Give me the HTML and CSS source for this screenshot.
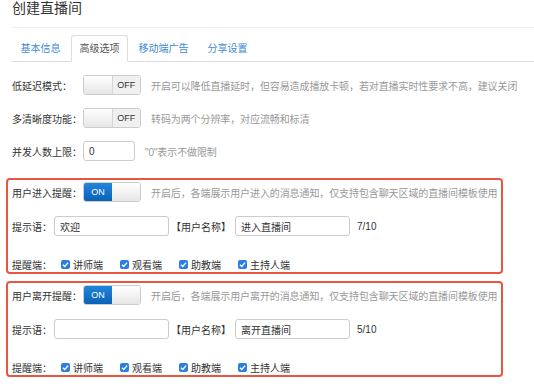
FILE: index.html
```html
<!DOCTYPE html>
<html lang="zh-CN">
<head>
  <meta charset="UTF-8" />
  <meta name="viewport" content="width=device-width, initial-scale=1.0"/>
  <title>创建直播间</title>
  <link rel="stylesheet" href="styles.css">
</head>
<body>
  <div class="page">
    <h1 class="page-title">创建直播间</h1>

    <ul class="nav-tabs">
      <li><a href="#">基本信息</a></li>
      <li class="active"><a href="#">高级选项</a></li>
      <li><a href="#">移动端广告</a></li>
      <li><a href="#">分享设置</a></li>
    </ul>

    <div class="form">
      <div class="form-row">
        <span class="form-label">低延迟模式：</span>
        <span class="switch switch-off"><span class="switch-handle"></span><span class="switch-label">OFF</span></span>
        <span class="hint">开启可以降低直播延时，但容易造成播放卡顿，若对直播实时性要求不高，建议关闭</span>
      </div>

      <div class="form-row">
        <span class="form-label">多清晰度功能：</span>
        <span class="switch switch-off"><span class="switch-handle"></span><span class="switch-label">OFF</span></span>
        <span class="hint">转码为两个分辨率，对应流畅和标清</span>
      </div>

      <div class="form-row">
        <span class="form-label">并发人数上限：</span>
        <input type="text" class="text-input input-small" value="0">
        <span class="hint">"0"表示不做限制</span>
      </div>

      <div class="notice-box">
        <div class="form-row">
          <span class="form-label">用户进入提醒：</span>
          <span class="switch switch-on"><span class="switch-label">ON</span><span class="switch-handle"></span></span>
          <span class="hint">开启后，各端展示用户进入的消息通知，仅支持包含聊天区域的直播间模板使用</span>
        </div>
        <div class="form-row msg-row">
          <span class="short-label">提示语：</span>
          <input type="text" class="text-input" value="欢迎">
          <span class="name-tag">【用户名称】</span>
          <input type="text" class="text-input" value="进入直播间">
          <span class="counter">7/10</span>
        </div>
        <div class="form-row check-row">
          <span class="short-label">提醒端：</span>
          <label class="check"><span class="check-box"><svg viewBox="0 0 10 10"><path d="M2.2 5.2 L4.2 7.2 L7.9 2.9" /></svg></span>讲师端</label>
          <label class="check"><span class="check-box"><svg viewBox="0 0 10 10"><path d="M2.2 5.2 L4.2 7.2 L7.9 2.9" /></svg></span>观看端</label>
          <label class="check"><span class="check-box"><svg viewBox="0 0 10 10"><path d="M2.2 5.2 L4.2 7.2 L7.9 2.9" /></svg></span>助教端</label>
          <label class="check"><span class="check-box"><svg viewBox="0 0 10 10"><path d="M2.2 5.2 L4.2 7.2 L7.9 2.9" /></svg></span>主持人端</label>
        </div>
      </div>

      <div class="notice-box">
        <div class="form-row">
          <span class="form-label">用户离开提醒：</span>
          <span class="switch switch-on"><span class="switch-label">ON</span><span class="switch-handle"></span></span>
          <span class="hint">开启后，各端展示用户离开的消息通知，仅支持包含聊天区域的直播间模板使用</span>
        </div>
        <div class="form-row msg-row">
          <span class="short-label">提示语：</span>
          <input type="text" class="text-input" value="">
          <span class="name-tag">【用户名称】</span>
          <input type="text" class="text-input" value="离开直播间">
          <span class="counter">5/10</span>
        </div>
        <div class="form-row check-row">
          <span class="short-label">提醒端：</span>
          <label class="check"><span class="check-box"><svg viewBox="0 0 10 10"><path d="M2.2 5.2 L4.2 7.2 L7.9 2.9" /></svg></span>讲师端</label>
          <label class="check"><span class="check-box"><svg viewBox="0 0 10 10"><path d="M2.2 5.2 L4.2 7.2 L7.9 2.9" /></svg></span>观看端</label>
          <label class="check"><span class="check-box"><svg viewBox="0 0 10 10"><path d="M2.2 5.2 L4.2 7.2 L7.9 2.9" /></svg></span>助教端</label>
          <label class="check"><span class="check-box"><svg viewBox="0 0 10 10"><path d="M2.2 5.2 L4.2 7.2 L7.9 2.9" /></svg></span>主持人端</label>
        </div>
      </div>
    </div>
  </div>
</body>
</html>
```

FILE: styles.css
```css
body {
  margin: 0;
  padding: 0;
  background-color: #ffffff;
  color: #333333;
  font-family: "Helvetica Neue", "Liberation Sans", "Noto Sans CJK SC", sans-serif;
  font-size: 10px;
}

.page {
  padding-left: 12px;
}

.page-title {
  margin: 0;
  padding-bottom: 11px;
  border-bottom: 1px solid #eeeeee;
  font-size: 14px;
  line-height: 16px;
  font-weight: normal;
  color: #333333;
}

.nav-tabs {
  display: flex;
  margin: 7px 0 0 0;
  padding: 0;
  list-style: none;
  border-bottom: 1px solid #dddddd;
}

.nav-tabs li {
  margin-right: 2px;
  margin-bottom: -1px;
}

.nav-tabs a {
  display: block;
  padding: 6px 7.5px;
  line-height: 13px;
  border: 1px solid transparent;
  border-radius: 3px 3px 0 0;
  color: #3d8bd1;
  text-decoration: none;
}

.nav-tabs .active a {
  color: #555555;
  background-color: #ffffff;
  border-color: #dddddd #dddddd transparent;
}

.form {
  padding-top: 13px;
}

.form-row {
  display: flex;
  align-items: center;
  height: 20px;
  margin-bottom: 13px;
}

.form-label {
  width: 71px;
  flex-shrink: 0;
}

.short-label {
  flex-shrink: 0;
  margin-right: 2px;
}

.hint {
  margin-left: 10px;
  color: #999999;
  white-space: nowrap;
  letter-spacing: -0.1px;
}

.switch {
  display: flex;
  width: 58px;
  height: 20px;
  box-sizing: border-box;
  border: 1px solid #cccccc;
  border-radius: 3px;
  overflow: hidden;
  flex-shrink: 0;
}

.switch-handle,
.switch-label {
  flex: 1;
  display: flex;
  align-items: center;
  justify-content: center;
  font-size: 9px;
  font-family: "Liberation Sans", sans-serif;
}

.switch-handle {
  background: linear-gradient(#ffffff, #e6e6e6);
}

.switch-off .switch-handle {
  border-right: 1px solid #d6d6d6;
}

.switch-off .switch-label {
  background-color: #f0f0f0;
  color: #333333;
}

.switch-on .switch-label {
  background: linear-gradient(#2384db, #0a62b5);
  color: #ffffff;
}

.text-input {
  width: 115px;
  height: 20px;
  box-sizing: border-box;
  margin: 0;
  padding: 0 5px;
  border: 1px solid #cccccc;
  border-radius: 3px;
  font-family: inherit;
  font-size: 10px;
  color: #333333;
  outline: none;
}

.input-small {
  width: 52px;
}

.name-tag {
  margin: 0 4px 0 2px;
}

.counter {
  margin-left: 7px;
  font-family: "Liberation Sans", sans-serif;
}

.notice-box {
  margin-left: -6px;
  width: 497px;
  box-sizing: border-box;
  padding: 2px 4px 0;
  border: 2px solid #e8563f;
  border-radius: 4px;
  margin-top: 17px;
}

.notice-box + .notice-box {
  margin-top: 7px;
}

.notice-box .form-row {
  margin-bottom: 0;
}

.notice-box .msg-row {
  margin-top: 14px;
}

.notice-box .check-row {
  margin-top: 20px;
  height: 16px;
}

.check-row .short-label {
  margin-right: 9px;
}

.check {
  display: flex;
  align-items: center;
  margin-right: 17px;
}

.check-box {
  width: 9px;
  height: 9px;
  margin-right: 3px;
  border-radius: 2px;
  background-color: #2a7de1;
  display: flex;
}

.check-box svg {
  width: 9px;
  height: 9px;
  fill: none;
  stroke: #ffffff;
  stroke-width: 1.6;
}
```
